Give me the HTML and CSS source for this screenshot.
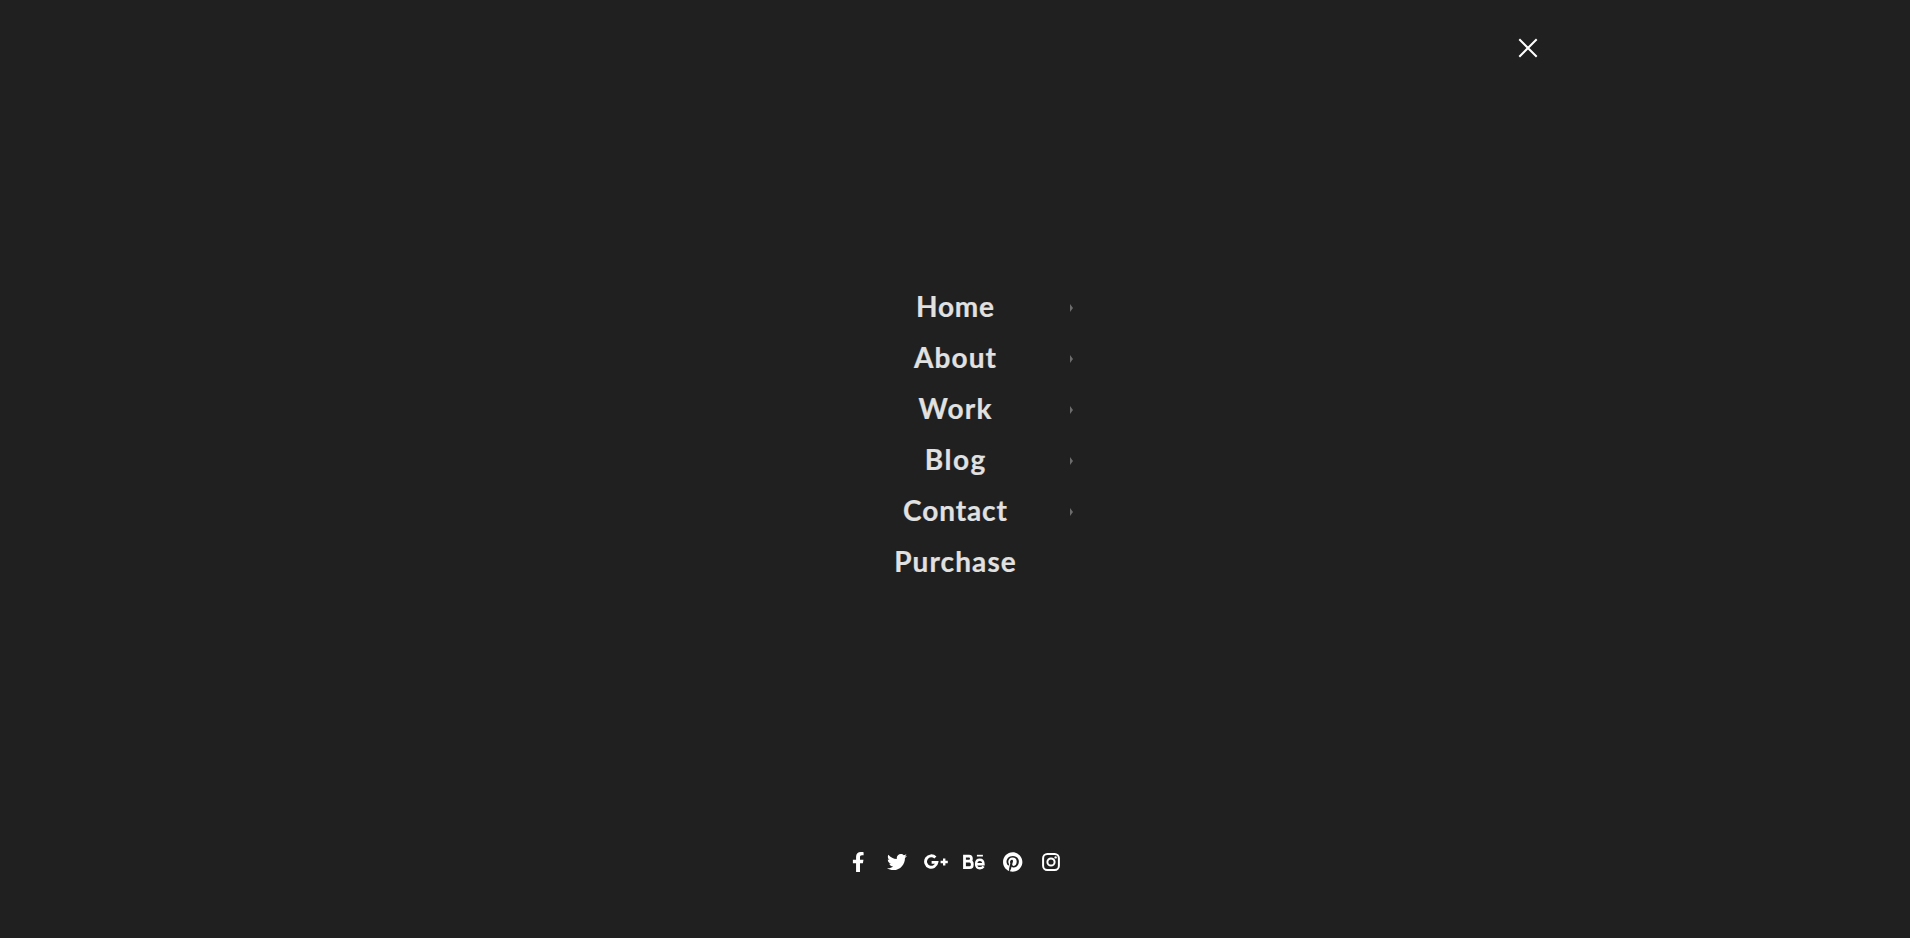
FILE: index.html
```html
<!DOCTYPE html>
<html lang="en">
<head>
<meta charset="utf-8">
<title>Menu</title>
<link rel="stylesheet" href="styles.css">
</head>
<body>
<div class="overlay">
  <header class="top">
    <button class="close" aria-label="Close"><svg width="20" height="20" viewBox="0 0 20 20"><path d="M1.3 1.3L18.7 18.7M18.7 1.3L1.3 18.7"/></svg></button>
  </header>
  <nav class="menu">
    <a class="item home" href="#"><span>Home</span><i class="arrow"></i></a>
    <a class="item about" href="#"><span>About</span><i class="arrow"></i></a>
    <a class="item work" href="#"><span>Work</span><i class="arrow"></i></a>
    <a class="item blog" href="#"><span>Blog</span><i class="arrow"></i></a>
    <a class="item contact" href="#"><span>Contact</span><i class="arrow"></i></a>
    <a class="item purchase" href="#"><span>Purchase</span></a>
  </nav>
  <footer class="social">
    <a href="#" aria-label="Facebook"><svg width="12.5" height="20" viewBox="0 0 320 512"><path d="M279.14 288l14.22-92.66h-88.91v-60.13c0-25.35 12.42-50.06 52.24-50.06h40.42V6.26S260.43 0 225.36 0c-73.22 0-121.08 44.38-121.08 124.72v70.62H22.89V288h81.39v224h100.17V288z"/></svg></a>
    <a href="#" aria-label="Twitter"><svg width="20" height="20" viewBox="0 0 512 512"><path d="M459.37 151.716c.325 4.548.325 9.097.325 13.645 0 138.72-105.583 298.558-298.558 298.558-59.452 0-114.68-17.219-161.137-47.106 8.447.974 16.568 1.299 25.34 1.299 49.055 0 94.213-16.568 130.274-44.832-46.132-.975-84.792-31.188-98.112-72.772 6.498.974 12.995 1.624 19.818 1.624 9.421 0 18.843-1.3 27.614-3.573-48.081-9.747-84.143-51.98-84.143-102.985v-1.299c13.969 7.797 30.214 12.67 47.431 13.319-28.264-18.843-46.781-51.005-46.781-87.391 0-19.492 5.197-37.36 14.294-52.954 51.655 63.675 129.3 105.258 216.365 109.807-1.624-7.797-2.599-15.918-2.599-24.04 0-57.828 46.782-104.934 104.934-104.934 30.213 0 57.502 12.67 76.67 33.137 23.715-4.548 46.456-13.32 66.599-25.34-7.798 24.366-24.366 44.833-46.132 57.827 21.117-2.273 41.584-8.122 60.426-16.243-14.292 20.791-32.161 39.308-52.628 54.253z"/></svg></a>
    <a href="#" aria-label="Google Plus"><svg width="24" height="20" viewBox="0 0 24 20"><path class="line" d="M11.4 5.6A5.7 5.7 0 1 0 12.9 10.4H7.6" stroke-width="2.9"/><path class="line" d="M20.2 6.5v7M16.6 10h7.2" stroke-width="2.4"/></svg></a>
    <a href="#" aria-label="Behance"><svg width="24" height="20" viewBox="0 0 24 20"><path class="line" d="M2.5 4.2H7Q9.4 4.2 9.4 6.7T7 9.2H2.5H7.4Q10.3 9.2 10.3 12.4T7.4 15.7H2.5Z" stroke-width="2.8"/><path class="line" d="M14.1 12.2H21.5Q21.4 7.8 17.8 7.8T14.1 12.1T18 16.2Q20.5 16.2 21.6 14.4" stroke-width="2.4"/><path d="M14.9 2.8h6v1.7h-6z"/></svg></a>
    <a href="#" aria-label="Pinterest"><svg width="19.4" height="20" viewBox="0 0 496 512"><path d="M496 256c0 137-111 248-248 248-25.6 0-50.2-3.9-73.4-11.1 10.1-16.5 25.2-43.5 30.8-65 3-11.6 15.4-59 15.4-59 8.1 15.4 31.7 28.5 56.8 28.5 74.8 0 128.7-68.8 128.7-154.3 0-81.9-66.9-143.2-152.9-143.2-107 0-163.9 71.8-163.9 150.1 0 36.4 19.4 81.7 50.3 96.1 4.7 2.2 7.2 1.2 8.3-3.3.8-3.4 5-20.3 6.9-28.1.6-2.5.3-4.7-1.7-7.1-10.1-12.5-18.3-35.3-18.3-56.6 0-54.7 41.4-107.6 112-107.6 60.9 0 103.6 41.5 103.6 100.9 0 67.1-33.9 113.6-78 113.6-24.3 0-42.6-20.1-36.7-44.8 7-29.5 20.5-61.3 20.5-82.6 0-19-10.2-34.9-31.4-34.9-24.9 0-44.9 25.7-44.9 60.2 0 22 7.4 36.8 7.4 36.8s-24.5 103.8-29 123.2c-5 21.4-3 51.6-.9 71.2C65.4 450.9 0 361.1 0 256 0 119 111 8 248 8s248 111 248 248z"/></svg></a>
    <a href="#" aria-label="Instagram"><svg width="20" height="20" viewBox="0 0 20 20"><rect class="line" x="2.1" y="2.1" width="15.8" height="15.8" rx="4.2" stroke-width="2"/><circle class="line" cx="10" cy="10" r="3.6" stroke-width="2"/><circle cx="14.6" cy="5.4" r="1.2"/></svg></a>
  </footer>
</div>
</body>
</html>
```
FILE: styles.css
```css
body {
  margin: 0;
  background: #202020;
  font-family: Lato, sans-serif;
}
.overlay {
  height: 938px;
  display: grid;
  grid-template-rows: 281px 306px 1fr;
  overflow: hidden;
}
.top {
  width: 1165px;
  margin: 0 auto;
  padding-top: 38px;
  display: flex;
  justify-content: flex-end;
  align-items: flex-start;
}
.close {
  display: flex;
  padding: 0;
  border: 0;
  background: none;
}
.close path {
  stroke: #fff;
  stroke-width: 2;
}
.menu {
  width: 240px;
  margin: 0 auto;
}
.item {
  --track: 0.9px;
  position: relative;
  display: flex;
  justify-content: center;
  height: 51px;
  line-height: 51px;
  font-size: 28px;
  font-weight: 700;
  color: #e1e1e1;
  text-decoration: none;
  -webkit-text-stroke: 0.2px #e1e1e1;
}
.item span {
  letter-spacing: var(--track);
  margin-right: calc(-1 * var(--track));
}
.home { --track: 0.8px; }
.about { --track: 1.1px; }
.work { --track: 1.2px; }
.blog { --track: 1.5px; }
.purchase { --track: 1.1px; }
.arrow {
  position: absolute;
  right: 2px;
  top: 23px;
  border: solid transparent;
  border-width: 4px 0 4px 3px;
  border-left-color: #6c6c6c;
}
.social {
  display: flex;
  justify-content: center;
  align-self: end;
  padding-bottom: 66px;
}
.social a {
  display: flex;
  justify-content: center;
  width: 38.6px;
}
.social svg {
  fill: #fff;
  flex: none;
}
.social .line {
  fill: none;
  stroke: #fff;
}
```
